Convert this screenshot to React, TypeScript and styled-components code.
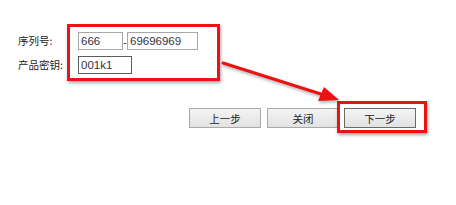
import React from "react";
import styled, { createGlobalStyle } from "styled-components";

const GlobalStyle = createGlobalStyle`
  html, body {
    margin: 0;
    padding: 0;
    background: #ffffff;
  }
  body {
    font-family: "Liberation Sans", "Noto Sans CJK SC", sans-serif;
  }
`;

export default function App() {
    return (
        <Page>
            <GlobalStyle />
            <Form>
                <LabelColumn>
                    <Label>序列号:</Label>
                    <Label>产品密钥:</Label>
                </LabelColumn>

                <Fields>
                    <FieldRow>
                        <TextBox $width={45} defaultValue="666" />
                        <Dash>-</Dash>
                        <TextBox $width={71} defaultValue="69696969" />
                    </FieldRow>
                    <FieldRow>
                        <TextBox $width={54} $focused defaultValue="001k1" />
                    </FieldRow>
                    <Highlight $top={-8} $left={-11} $right={-22} $bottom={-7} />
                </Fields>
            </Form>

            <ButtonBar>
                <Button>上一步</Button>
                <Button>关闭</Button>
                <Marked>
                    <Button $focused>下一步</Button>
                    <Highlight $top={-7} $left={-7} $right={-11} $bottom={-5} />
                </Marked>
            </ButtonBar>

            <Arrow width="456" height="205" viewBox="0 0 456 205">
                <line x1="223" y1="63" x2="324" y2="95" stroke="#ee1111" strokeWidth="3" strokeLinecap="round" />
                <polygon points="339,100 318,101 324,87" fill="#ee1111" />
            </Arrow>
        </Page>
    );
}

const Page = styled.div`
    position: relative;
    width: 456px;
    height: 205px;
    overflow: hidden;
    background: #ffffff;
`;

const Form = styled.div`
    display: flex;
    padding: 32px 0 0 18px;
`;

const LabelColumn = styled.div`
    display: flex;
    flex-direction: column;
    gap: 6px;
    width: 60px;
`;

const Label = styled.div`
    height: 18px;
    line-height: 18px;
    font-family: "Noto Sans CJK SC", sans-serif;
    font-size: 10.5px;
    color: #222222;
`;

const Fields = styled.div`
    position: relative;
    display: flex;
    flex-direction: column;
    gap: 6px;
`;

const FieldRow = styled.div`
    display: flex;
    align-items: flex-end;
`;

const TextBox = styled.input<{ $width: number; $focused?: boolean }>`
    box-sizing: border-box;
    width: ${(p) => p.$width}px;
    height: 18px;
    margin: 0;
    padding: 0 2px;
    border: 1px solid ${(p) => (p.$focused ? "#5c5c5c" : "#a8a8a8")};
    background: #ffffff;
    font-family: "Liberation Sans", sans-serif;
    font-size: 11.5px;
    color: #333344;
    outline: none;
`;

const Dash = styled.span`
    width: 4px;
    font-family: "Liberation Sans", sans-serif;
    font-size: 10px;
    line-height: 14px;
    color: #333333;
    text-align: center;
`;

const Highlight = styled.div<{ $top: number; $left: number; $right: number; $bottom: number }>`
    position: absolute;
    top: ${(p) => p.$top}px;
    left: ${(p) => p.$left}px;
    right: ${(p) => p.$right}px;
    bottom: ${(p) => p.$bottom}px;
    border: 3px solid #ee1111;
    box-shadow: 1px 2px 3px rgba(0, 0, 0, 0.35);
    pointer-events: none;
`;

const ButtonBar = styled.div`
    display: flex;
    gap: 6px;
    padding: 34px 0 0 189px;
`;

const Marked = styled.div`
    position: relative;
    display: flex;
    margin-left: -1px;
`;

const Button = styled.button<{ $focused?: boolean }>`
    box-sizing: border-box;
    width: 72px;
    height: 20px;
    margin: 0;
    padding: 0;
    border: 1px solid ${(p) => (p.$focused ? "#6a6a6a" : "#a9a9a9")};
    background: linear-gradient(#f4f4f4, #e2e2e2);
    font-family: "Noto Sans CJK SC", sans-serif;
    font-size: 10.5px;
    color: #222222;
`;

const Arrow = styled.svg`
    position: absolute;
    top: 0;
    left: 0;
    pointer-events: none;
    filter: drop-shadow(1px 2px 1.5px rgba(0, 0, 0, 0.3));
`;
